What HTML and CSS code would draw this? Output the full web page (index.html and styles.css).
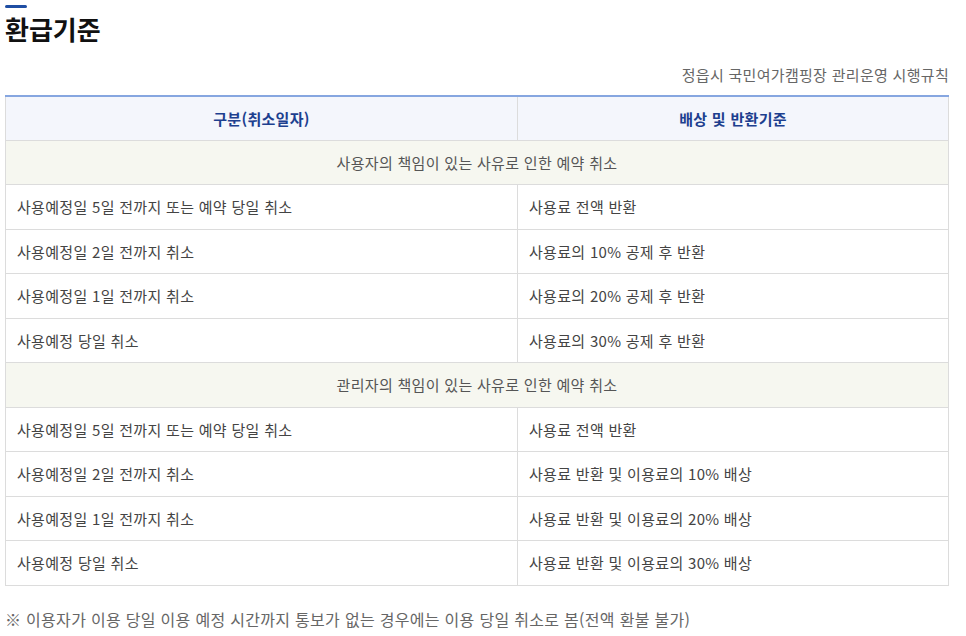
FILE: index.html
```html
<!DOCTYPE html>
<html lang="ko">
<head>
<meta charset="utf-8">
<link rel="stylesheet" href="styles.css">
</head>
<body>
<div class="page">
  <div class="title-bar"></div>
  <h2 class="title">환급기준</h2>
  <p class="source">정읍시 국민여가캠핑장 관리운영 시행규칙</p>
  <table class="refund">
    <thead>
      <tr><th>구분(취소일자)</th><th>배상 및 반환기준</th></tr>
    </thead>
    <tbody>
      <tr class="section"><td colspan="2">사용자의 책임이 있는 사유로 인한 예약 취소</td></tr>
      <tr><td>사용예정일 5일 전까지 또는 예약 당일 취소</td><td>사용료 전액 반환</td></tr>
      <tr><td>사용예정일 2일 전까지 취소</td><td>사용료의 10% 공제 후 반환</td></tr>
      <tr><td>사용예정일 1일 전까지 취소</td><td>사용료의 20% 공제 후 반환</td></tr>
      <tr><td>사용예정 당일 취소</td><td>사용료의 30% 공제 후 반환</td></tr>
      <tr class="section"><td colspan="2">관리자의 책임이 있는 사유로 인한 예약 취소</td></tr>
      <tr><td>사용예정일 5일 전까지 또는 예약 당일 취소</td><td>사용료 전액 반환</td></tr>
      <tr><td>사용예정일 2일 전까지 취소</td><td>사용료 반환 및 이용료의 10% 배상</td></tr>
      <tr><td>사용예정일 1일 전까지 취소</td><td>사용료 반환 및 이용료의 20% 배상</td></tr>
      <tr><td>사용예정 당일 취소</td><td>사용료 반환 및 이용료의 30% 배상</td></tr>
    </tbody>
  </table>
  <p class="note">※ 이용자가 이용 당일 이용 예정 시간까지 통보가 없는 경우에는 이용 당일 취소로 봄(전액 환불 불가)</p>
</div>
</body>
</html>
```

FILE: styles.css
```css
html, body {
  margin: 0;
  padding: 0;
  background: #fff;
}
body {
  font-family: "Noto Sans CJK KR", "Noto Sans", sans-serif;
  color: #444;
}
.page {
  width: 944px;
  padding: 5px 0 0 5px;
}
.title-bar {
  width: 22px;
  height: 3px;
  background: #1f4ea3;
  border-radius: 2px;
}
.title {
  margin: 4px 0 0 0;
  font-size: 26px;
  line-height: 34px;
  font-weight: 700;
  color: #111;
}
.source {
  margin: 19px 0 0 0;
  text-align: right;
  font-size: 15px;
  line-height: 20px;
  letter-spacing: 0.3px;
  color: #666;
}
.refund {
  margin-top: 10px;
  width: 944px;
  border-collapse: collapse;
  table-layout: fixed;
  border-top: 2px solid #86a6e0;
  font-size: 15px;
  letter-spacing: 0.3px;
}
.refund th, .refund td {
  height: 44.5px;
  box-sizing: border-box;
  border: 1px solid #dcdcdc;
  padding: 0 11px;
  text-align: left;
  font-weight: 400;
  color: #444;
}
.refund th {
  background: #f4f6fc;
  text-align: center;
  font-weight: 700;
  color: #1d3f8f;
  height: 44px;
}
.refund th:first-child,
.refund td:first-child {
  width: 512px;
}
.refund tr.section td {
  background: #f6f7f0;
  text-align: center;
  color: #555;
}
.note {
  margin: 22px 0 0 0;
  font-size: 16px;
  line-height: 22px;
  letter-spacing: 0.3px;
  color: #666;
}
```
